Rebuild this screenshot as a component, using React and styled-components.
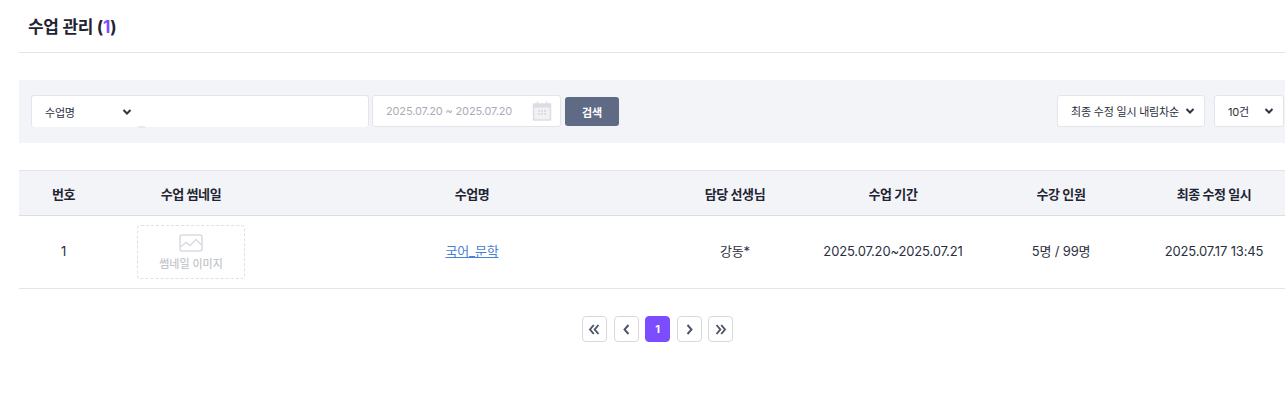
import React from "react"
import styled, { createGlobalStyle } from "styled-components"

const GlobalStyle = createGlobalStyle`
  html, body {
    margin: 0;
    padding: 0;
    background: #fff;
    overflow: hidden;
  }
  body {
    font-family: Inter, "Noto Sans CJK KR", sans-serif;
    color: #1f2433;
  }
`

const columns = [
  { title: "번호", width: 89 },
  { title: "수업 썸네일", width: 166 },
  { title: "수업명", width: 396 },
  { title: "담당 선생님", width: 130 },
  { title: "수업 기간", width: 186 },
  { title: "수강 인원", width: 150 },
  { title: "최종 수정 일시", width: 156 },
]

const Chevron = () => (
  <ChevronSvg viewBox="0 0 10 8">
    <path d="M1.5 2 L5 5.5 L8.5 2" fill="none" stroke="#2f3445" strokeWidth="2" />
  </ChevronSvg>
)

const PagerIcon = ({ d }) => (
  <svg width="15" height="15" viewBox="0 0 15 15">
    <path d={d} fill="none" stroke="#4d5468" strokeWidth="1.9" />
  </svg>
)

const App = () => (
  <>
    <GlobalStyle />
    <Page>
      <Header>
        <Title>
          수업 관리 (<Count>1</Count>)
        </Title>
      </Header>

      <FilterBar>
        <SearchBox>
          <SelectLabel>수업명</SelectLabel>
          <Chevron />
          <SearchNub />
        </SearchBox>
        <DateBox>
          <DateText>2025.07.20 ~ 2025.07.20</DateText>
          <svg width="20" height="20" viewBox="0 0 20 20">
            <rect x="1.5" y="3" width="17" height="16" fill="#f0f1f4" stroke="#dcdde2" strokeWidth="1.4" />
            <rect x="1.5" y="3" width="17" height="3.5" fill="#dcdde2" />
            <path d="M5.5 .5v3M14.5 .5v3" stroke="#dcdde2" strokeWidth="1.4" />
            <path d="M6 10h2M9 10h2M12 10h2M6 13h2M9 13h2M12 13h2" stroke="#d5d7dd" strokeWidth="1.4" />
          </svg>
        </DateBox>
        <SearchButton>검색</SearchButton>
        <RightGroup>
          <SelectBox $width={148}>
            <SelectLabel>최종 수정 일시 내림차순</SelectLabel>
            <Chevron />
          </SelectBox>
          <SelectBox $width={70}>
            <SelectLabel>10건</SelectLabel>
            <Chevron />
          </SelectBox>
        </RightGroup>
      </FilterBar>

      <Table>
        <colgroup>
          {columns.map((c) => (
            <col key={c.title} width={c.width} />
          ))}
        </colgroup>
        <thead>
          <tr>
            {columns.map((c) => (
              <Th key={c.title}>{c.title}</Th>
            ))}
          </tr>
        </thead>
        <tbody>
          <tr>
            <Td>1</Td>
            <Td>
              <Thumb>
                <svg width="24" height="18" viewBox="0 0 24 18">
                  <rect x="1" y="1" width="22" height="16" rx="2" fill="none" stroke="#d9dbe0" strokeWidth="1.6" />
                  <path d="M1.5 13 L7 8.5 L11 11.5 L17 5.5 L22.5 11" fill="none" stroke="#d9dbe0" strokeWidth="1.4" />
                </svg>
                <ThumbText>썸네일 이미지</ThumbText>
              </Thumb>
            </Td>
            <Td>
              <CourseLink href="#">국어_문학</CourseLink>
            </Td>
            <Td>강동*</Td>
            <Td>2025.07.20~2025.07.21</Td>
            <Td>5명 / 99명</Td>
            <Td>2025.07.17 13:45</Td>
          </tr>
        </tbody>
      </Table>

      <Pagination>
        <PageButton>
          <PagerIcon d="M6.8 3 L3 7.5 L6.8 12 M11.5 3 L7.7 7.5 L11.5 12" />
        </PageButton>
        <PageButton>
          <PagerIcon d="M9.5 3 L5.5 7.5 L9.5 12" />
        </PageButton>
        <PageButton $active>1</PageButton>
        <PageButton>
          <PagerIcon d="M5.5 3 L9.5 7.5 L5.5 12" />
        </PageButton>
        <PageButton>
          <PagerIcon d="M3.5 3 L7.3 7.5 L3.5 12 M8.2 3 L12 7.5 L8.2 12" />
        </PageButton>
      </Pagination>
    </Page>
  </>
)

export default App

const Page = styled.div`
  width: 1277px;
  margin-left: 19px;
`

const Header = styled.div`
  height: 52px;
  border-bottom: 1px solid #e4e5e8;
  display: flex;
  align-items: center;
`

const Title = styled.h2`
  margin: 0 0 2px 9px;
  font-size: 17px;
  font-weight: 700;
  letter-spacing: -0.3px;
  color: #1f2433;
`

const Count = styled.span`
  color: #7c4dff;
  font-weight: 700;
`

const FilterBar = styled.div`
  margin-top: 27px;
  height: 63px;
  box-sizing: border-box;
  padding: 15px 12px 0;
  background: #f3f4f8;
  display: flex;
  align-items: flex-start;
`

const SearchBox = styled.div`
  position: relative;
  width: 338px;
  height: 32px;
  box-sizing: border-box;
  padding-left: 13px;
  background: #fff;
  border: 1px solid #e4e5ea;
  border-bottom: 0;
  border-radius: 3px;
  display: flex;
  align-items: center;
  gap: 47px;
`

const SearchNub = styled.span`
  position: absolute;
  left: 105px;
  bottom: -1px;
  width: 9px;
  height: 2px;
  border-radius: 4px 4px 0 0;
  background: #e9eaee;
`

const SelectLabel = styled.span`
  font-size: 11px;
  letter-spacing: -0.2px;
  color: #2b3040;
  white-space: nowrap;
`

const ChevronSvg = styled.svg`
  width: 10px;
  height: 8px;
  flex: none;
`

const DateBox = styled.div`
  margin-left: 3px;
  width: 189px;
  height: 32px;
  box-sizing: border-box;
  padding: 0 8px 0 13px;
  background: #fff;
  border: 1px solid #e4e5ea;
  border-radius: 3px;
  display: flex;
  align-items: center;
  justify-content: space-between;
`

const DateText = styled.span`
  font-size: 11px;
  letter-spacing: -0.15px;
  color: #a9acb6;
  white-space: nowrap;
`

const SearchButton = styled.button`
  margin: 2px 0 0 4px;
  width: 54px;
  height: 29px;
  padding: 0;
  border: 0;
  border-radius: 3px;
  background: #5f6a84;
  color: #fff;
  font-family: inherit;
  font-size: 11px;
  font-weight: 700;
`

const RightGroup = styled.div`
  margin-left: auto;
  display: flex;
  gap: 9px;
`

const SelectBox = styled.div`
  width: ${(p) => p.$width}px;
  height: 32px;
  box-sizing: border-box;
  padding: 0 9px 0 13px;
  background: #fff;
  border: 1px solid #e4e5ea;
  border-radius: 3px;
  display: flex;
  align-items: center;
  justify-content: space-between;
`

const Table = styled.table`
  margin-top: 27px;
  width: 1273px;
  table-layout: fixed;
  border-collapse: collapse;
`

const Th = styled.th`
  height: 44px;
  padding: 0;
  background: #f3f4f8;
  border-top: 1px solid #e4e5e9;
  border-bottom: 1px solid #dcdde2;
  font-size: 13px;
  font-weight: 700;
  letter-spacing: -0.4px;
  color: #1f2433;
`

const Td = styled.td`
  height: 73px;
  box-sizing: border-box;
  padding: 0 0 3px;
  border-bottom: 1px solid #e4e5e8;
  text-align: center;
  font-size: 13px;
  letter-spacing: -0.15px;
  color: #2b3040;
`

const Thumb = styled.div`
  margin: 3px auto 0;
  width: 108px;
  height: 54px;
  box-sizing: border-box;
  border: 1px dashed #dfe0e5;
  border-radius: 4px;
  display: flex;
  flex-direction: column;
  align-items: center;
  justify-content: center;
  gap: 3px;
`

const ThumbText = styled.span`
  font-size: 11px;
  font-weight: 500;
  letter-spacing: 0;
  color: #c4c6cc;
`

const CourseLink = styled.a`
  color: #4a7fd6;
  text-decoration: underline;
`

const Pagination = styled.div`
  margin-top: 27px;
  display: flex;
  justify-content: center;
  gap: 6.5px;
`

const PageButton = styled.div`
  width: 25px;
  height: 26px;
  box-sizing: border-box;
  border-radius: 4px;
  border: 1px solid ${(p) => (p.$active ? "#7c4dff" : "#d8d9de")};
  background: ${(p) => (p.$active ? "#7c4dff" : "#fff")};
  color: #fff;
  font-size: 11px;
  font-weight: 700;
  display: flex;
  align-items: center;
  justify-content: center;
`
